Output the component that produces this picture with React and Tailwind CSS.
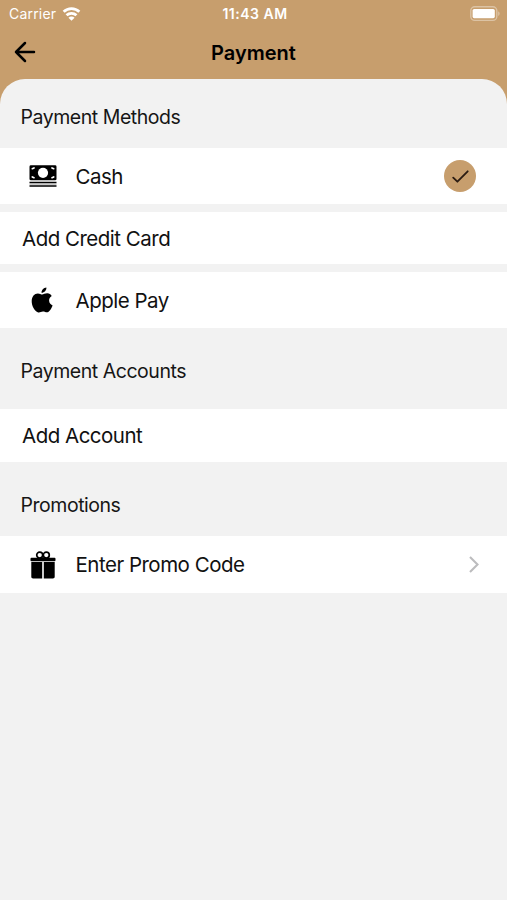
import clsx from 'clsx'

function WifiIcon() {
  return (
    <svg width="19" height="14" viewBox="0 0 20 15" fill="none" stroke="#fff" strokeWidth="3">
      <path d="M1.6 5.2a12 12 0 0 1 16.8 0" />
      <path d="M4.7 8.9a7.6 7.6 0 0 1 10.6 0" />
      <path d="M10 14.8 6.7 11.5a4.6 4.6 0 0 1 6.6 0Z" fill="#fff" stroke="none" />
    </svg>
  )
}

function BatteryIcon() {
  return (
    <svg width="31" height="16" viewBox="0 0 31 16">
      <rect x="0.8" y="0.8" width="26" height="13.6" rx="4" fill="none" stroke="#fff" strokeOpacity="0.38" strokeWidth="1.4" />
      <rect x="2.6" y="3" width="22.2" height="9.2" rx="1.6" fill="#fff" />
      <path d="M28.3 5.3c1.7.8 1.7 3.8 0 4.6Z" fill="#fff" fillOpacity="0.45" />
    </svg>
  )
}

function BackIcon() {
  return (
    <svg width="22" height="22" viewBox="0 0 22 22" fill="none" stroke="#000" strokeWidth="2.5" strokeLinecap="round" strokeLinejoin="round">
      <path d="M20 11H2M11 2 2 11l9 9" />
    </svg>
  )
}

function CashIcon() {
  return (
    <svg width="28" height="22" viewBox="0 -0.3 28 22">
      <rect x="0.5" y="0" width="27" height="15" rx="1.4" fill="#000" />
      <circle cx="14" cy="7.5" r="5.1" fill="#fff" />
      <g stroke="#fff" strokeWidth="1.7" strokeLinecap="round">
        <path d="M3.3 3.4 5 2.6M24.7 3.4 23 2.6M3.3 11.6l1.7.8M24.7 11.6l-1.7.8" />
      </g>
      <path d="M0.5 17.2h27M0.5 20.7h27" stroke="#000" strokeWidth="1.5" />
      <path d="M0.5 18.9h27" stroke="#000" strokeOpacity="0.3" strokeWidth="1" />
    </svg>
  )
}

function AppleIcon() {
  return (
    <svg width="24" height="26" viewBox="0 0 24 26" fill="#000">
      <path d="M15.4.4c.2 2.7-2.2 5.4-4.9 5.3C10.3 3.1 12.7.6 15.4.4Z" />
      <path d="M20.7 8.9c-1.7 1.1-2.7 2.6-2.6 4.7.1 2.4 1.4 4 3.5 4.9-.8 2.4-2.5 5.4-4.3 6.5-1.8 1-3.2-.4-5.3-.4s-3.4 1.4-5.3.6C3.3 23.6.6 18.4.7 13.9.8 9.4 3.4 6.4 6.9 6.4c1.7 0 3.2 1.1 4.3 1.1 1.3 0 3-1.3 5.2-1.2 1.8.1 3.3.9 4.3 2.6Z" />
    </svg>
  )
}

function GiftIcon() {
  return (
    <svg width="26" height="28" viewBox="0 0 26 28">
      <g fill="none" stroke="#000" strokeWidth="1.7">
        <circle cx="9.7" cy="4.1" r="3" />
        <circle cx="16.3" cy="4.1" r="3" />
      </g>
      <rect x="0.5" y="6.8" width="25" height="3.4" rx="0.9" fill="#000" />
      <path d="M1.3 11.1h10.9v16.3H3.1c-1.1 0-1.8-.7-1.8-1.7ZM13.8 11.1h10.9v14.6c0 1-.7 1.7-1.8 1.7h-9.1Z" fill="#000" />
    </svg>
  )
}

function CheckBadge() {
  return (
    <span className="flex size-8 items-center justify-center rounded-full bg-[#c79e6d]">
      <svg width="17" height="13" viewBox="0 0 17 13" fill="none" stroke="#2b1c12" strokeWidth="1.8" strokeLinecap="round" strokeLinejoin="round">
        <path d="M1.2 7.6 5.4 11.7 15.7 1.3" />
      </svg>
    </span>
  )
}

function ChevronIcon() {
  return (
    <svg width="12" height="18" viewBox="0 0 12 18" fill="none" stroke="#bcbcbe" strokeWidth="2.1">
      <path d="M2 1 9.5 8.5 2 16" />
    </svg>
  )
}

function SectionTitle({ children, className }) {
  return (
    <h2 className={clsx('flex items-center pl-[20.5px] text-[19.5px] leading-6 tracking-[-0.46px] text-[#161616]', className)}>
      {children}
    </h2>
  )
}

function Row({ icon, label, trailing, className, labelClassName }) {
  return (
    <div className={clsx('flex items-center bg-white text-[20.5px] leading-6 tracking-[-0.5px] text-[#111]', className)}>
      {icon && <span className="ml-[22.5px] flex w-10 shrink-0 justify-center">{icon}</span>}
      <span className={clsx(icon ? 'ml-[13px]' : 'ml-[22px]', labelClassName)}>{label}</span>
      {trailing && <span className="ml-auto">{trailing}</span>}
    </div>
  )
}

export default function App() {
  return (
    <div className="h-[900px] w-full overflow-hidden bg-[#c79e6d] font-['Inter',sans-serif]">
      <header className="h-[79px]">
        <div className="grid h-[27px] grid-cols-3 items-center pr-1.5 pl-[9px] text-white">
          <div className="flex items-center gap-1.5 text-[14px] leading-7">
            <span className="tracking-[0.2px]">Carrier</span>
            <WifiIcon />
          </div>
          <span className="text-center text-[14px] leading-7 font-semibold tracking-[0.5px]">11:43 AM</span>
          <span className="flex justify-end">
            <BatteryIcon />
          </span>
        </div>
        <div className="grid h-[50px] grid-cols-[60px_1fr_60px] items-center">
          <button className="pl-3.5" aria-label="Back">
            <BackIcon />
          </button>
          <h1 className="pt-px text-center text-[20px] leading-6 font-semibold text-black">Payment</h1>
        </div>
      </header>

      <main className="h-[821px] rounded-t-[25px] bg-[#f2f2f2]">
        <SectionTitle className="h-[69px] pt-1.5">Payment Methods</SectionTitle>
        <div className="flex flex-col gap-2">
          <Row className="h-14 pr-[31px]" labelClassName="pt-0.5" icon={<CashIcon />} label="Cash" trailing={<CheckBadge />} />
          <Row className="h-[52px]" labelClassName="pt-0.5" label="Add Credit Card" />
          <Row className="h-14" labelClassName="pt-0.5" icon={<AppleIcon />} label="Apple Pay" />
        </div>

        <SectionTitle className="h-[81px] pt-1">Payment Accounts</SectionTitle>
        <Row className="h-[53px]" label="Add Account" />

        <SectionTitle className="h-[74px] pt-3">Promotions</SectionTitle>
        <Row className="h-[57px] pr-[27px]" icon={<GiftIcon />} label="Enter Promo Code" trailing={<ChevronIcon />} />
      </main>
    </div>
  )
}
